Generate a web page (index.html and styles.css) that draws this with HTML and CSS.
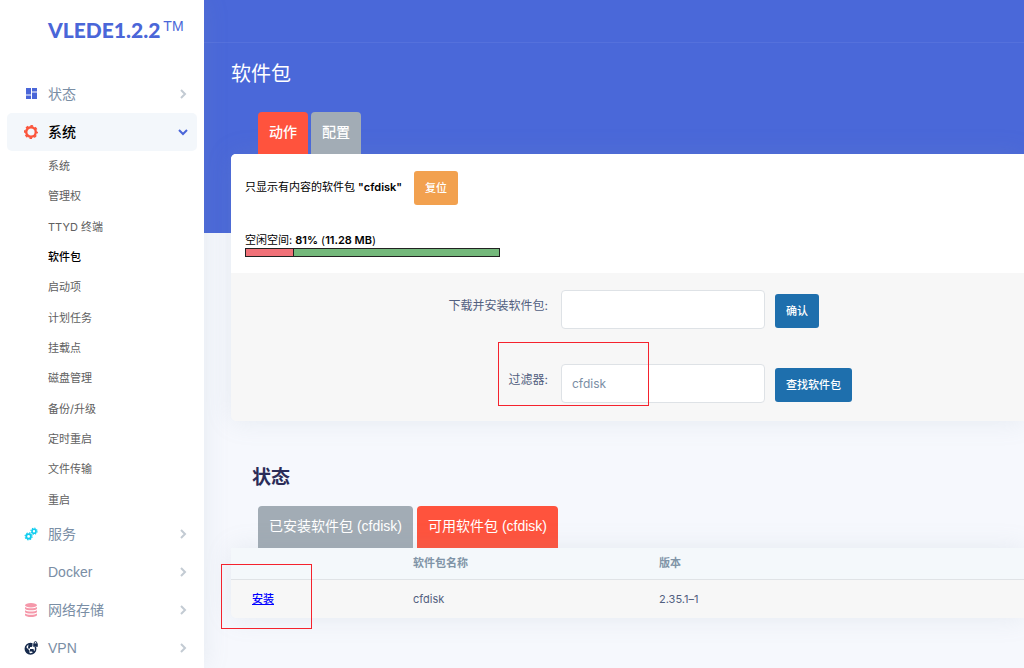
FILE: index.html
```html
<!DOCTYPE html>
<html lang="zh-CN">
<head>
  <meta charset="UTF-8">
  <meta name="viewport" content="width=device-width, initial-scale=1.0">
  <title>软件包</title>
  <link rel="stylesheet" href="styles.css">
</head>
<body>

  <!-- SIDEBAR -->
  <aside class="sidebar">
    <a class="brand" href="#">VLEDE1.2.2<span class="tm">TM</span></a>
    <nav class="menu">
      <a class="menu-item" href="#">
        <svg class="icon" viewBox="0 0 14 14" fill="#4a66d8"><path d="M2 1h5v6.500H2zM8 1h5v3.500H8zM8 5.500h5V12H8zM2 8.500h5V12H2z"/></svg>
        <span>状态</span>
        <svg class="arrow" viewBox="0 0 10 10"><path d="M3 1l4 4-4 4"/></svg>
      </a>
      <a class="menu-item open" href="#">
        <svg class="icon" viewBox="0 0 14 14" fill="none" stroke="#fb553c"><circle cx="7" cy="7" r="4.8" stroke-width="2.4"/><circle cx="7" cy="7" r="6.2" stroke-width="1.6" stroke-dasharray="2.6 2.27" stroke-dashoffset="1.3"/></svg>
        <span>系统</span>
        <svg class="arrow" viewBox="0 0 10 10"><path d="M1 3l4 4 4-4"/></svg>
      </a>
      <div class="submenu">
        <a href="#">系统</a>
        <a href="#">管理权</a>
        <a href="#">TTYD 终端</a>
        <a class="active" href="#">软件包</a>
        <a href="#">启动项</a>
        <a href="#">计划任务</a>
        <a href="#">挂载点</a>
        <a href="#">磁盘管理</a>
        <a href="#">备份/升级</a>
        <a href="#">定时重启</a>
        <a href="#">文件传输</a>
        <a href="#">重启</a>
      </div>
      <a class="menu-item" href="#">
        <svg class="icon" viewBox="0 0 14 14" fill="none" stroke="#11cdef"><circle cx="4.600" cy="9.400" r="2.300" stroke-width="1.800"/><circle cx="4.600" cy="9.400" r="3.500" stroke-width="1.200" stroke-dasharray="1.500 1.250"/><circle cx="10" cy="4.200" r="2" stroke-width="1.600"/><circle cx="10" cy="4.200" r="3.100" stroke-width="1.100" stroke-dasharray="1.300 1.130"/></svg>
        <span>服务</span>
        <svg class="arrow" viewBox="0 0 10 10"><path d="M3 1l4 4-4 4"/></svg>
      </a>
      <a class="menu-item" href="#">
        <span class="icon"></span>
        <span>Docker</span>
        <svg class="arrow" viewBox="0 0 10 10"><path d="M3 1l4 4-4 4"/></svg>
      </a>
      <a class="menu-item" href="#">
        <svg class="icon" viewBox="0 0 14 14" fill="#f598aa"><ellipse cx="7" cy="2.300" rx="6" ry="2.200"/><path d="M1 4c2 1.800 10 1.800 12 0v1.800c-1 2-11 2-12 0zM1 7.200c2 1.800 10 1.800 12 0V9c-1 2-11 2-12 0zM1 10.400c2 1.800 10 1.800 12 0v1.800c-1 2.400-11 2.400-12 0z"/></svg>
        <span>网络存储</span>
        <svg class="arrow" viewBox="0 0 10 10"><path d="M3 1l4 4-4 4"/></svg>
      </a>
      <a class="menu-item" href="#">
        <svg class="icon" viewBox="0 0 14 14"><circle cx="6.500" cy="7.700" r="5.200" fill="none" stroke="#172b4d" stroke-width="1.500"/><path d="M1.500 5.500l4 4V13C2.500 12.500 1 9 1.500 5.500zM4.500 3L9 2v3L7.500 6H6v1.500H4zM6 8h3.500l.5 2h1.500L9.500 12.500 8 10.500H6z" fill="#172b4d"/><path d="M8.500 0H14v6H8.500z" fill="#fff"/><path d="M9.200 2.400h4.600v3.400H9.200z" fill="#172b4d"/><path d="M10.300 2.600v-.8a1.200 1.200 0 0 1 2.400 0v.8" fill="none" stroke="#172b4d"/></svg>
        <span>VPN</span>
        <svg class="arrow" viewBox="0 0 10 10"><path d="M3 1l4 4-4 4"/></svg>
      </a>
    </nav>
  </aside>

  <!-- CONTENT -->
  <main class="main">
    <div class="topbar"></div>
    <h1 class="title">软件包</h1>

    <div class="tabs">
      <button class="tab on" type="button">动作</button>
      <button class="tab" type="button">配置</button>
    </div>
    <form class="card">
      <div class="card-head">
        <div class="only-row">
          <span>只显示有内容的软件包 <b>"cfdisk"</b></span>
          <button class="btn btn-reset" type="button">复位</button>
        </div>
        <div class="space-text">空闲空间: <b>81%</b> (<b>11.28 MB</b>)</div>
        <div class="space-bar"><div class="used" style="width: 19%"></div></div>
      </div>
      <div class="card-form">
        <div class="row">
          <label for="url">下载并安装软件包:</label>
          <input type="text" id="url">
          <button class="btn" type="button">确认</button>
        </div>
        <div class="row">
          <label for="query">过滤器:</label>
          <input type="text" id="query" value="cfdisk">
          <button class="btn" type="button">查找软件包</button>
          <i class="mark mark-filter"></i>
        </div>
      </div>
    </form>

    <h2 class="subtitle">状态</h2>
    <div class="tabs tabs-list">
      <button class="tab" type="button">已安装软件包 (cfdisk)</button>
      <button class="tab on" type="button">可用软件包 (cfdisk)</button>
    </div>
    <div class="list">
      <table>
        <thead>
          <tr><th class="col-act"></th><th class="col-name">软件包名称</th><th>版本</th></tr>
        </thead>
        <tbody>
          <tr><td><a href="#">安装</a></td><td>cfdisk</td><td>2.35.1–1</td></tr>
        </tbody>
      </table>
      <i class="mark mark-install"></i>
    </div>
  </main>

</body>
</html>
```
FILE: styles.css
```css
* { margin: 0; padding: 0; box-sizing: border-box; }

body {
  display: flex;
  min-height: 100vh;
  font-family: Inter, "Noto Sans CJK SC", sans-serif;
  font-size: 11px;
  line-height: 16px;
  color: #000;
  background: #f6f8fd;
  overflow: hidden;
}

button, input { font: inherit; }

/* sidebar */
.sidebar {
  position: relative;
  z-index: 1;
  flex: 0 0 204px;
  background: #fff;
  box-shadow: 0 0 24px rgba(136,152,170,0.15);
}

.brand {
  display: flex;
  height: 75px;
  padding: 14px 0 0 48px;
  font-family: Lato, sans-serif;
  font-size: 21px;
  font-weight: 900;
  line-height: 32px;
  color: #4a66d8;
  text-decoration: none;
}

.tm {
  margin-left: 3px;
  font-family: "Liberation Sans", sans-serif;
  font-size: 14px;
  font-weight: 400;
  line-height: 24px;
}

.menu-item {
  display: flex;
  align-items: center;
  height: 38px;
  margin: 0 7px;
  padding: 0 9px 0 17px;
  border-radius: 5px;
  font-family: "Liberation Sans", "Noto Sans CJK SC", sans-serif;
  font-size: 14px;
  color: #7a8ea5;
  text-decoration: none;
}

.menu-item.open { background: #f3f7fb; color: #000; font-weight: 500; }

.icon { width: 14px; height: 14px; margin-right: 10px; }

.arrow {
  width: 10px;
  height: 10px;
  margin-left: auto;
  fill: none;
  stroke: #c3cbd3;
  stroke-width: 2;
}

.open .arrow { stroke: #4a66d8; }

.submenu {
  display: grid;
  grid-auto-rows: 1fr;
  height: 364px;
}

.submenu a {
  display: flex;
  align-items: center;
  padding-left: 48px;
  color: #606060;
  text-decoration: none;
}

.submenu .active { color: #000; font-weight: 500; }

/* content */
.main {
  flex: 1;
  min-width: 0;
  padding-left: 27px;
  background: linear-gradient(#4a68d9, #4a68d9) 0 0 / 100% 233px no-repeat;
}

.topbar {
  height: 43px;
  margin-left: -27px;
  border-bottom: 1px solid #5571dc;
}

.title {
  padding: 16px 0 22px;
  font-size: 20px;
  font-weight: 400;
  line-height: 31px;
  color: #fff;
}

.tabs { display: flex; gap: 3px; padding-left: 27px; }

.tab {
  height: 42px;
  padding: 0 11px 2px;
  border: 0;
  border-radius: 4px 4px 0 0;
  background: #a2acb5;
  color: #fff;
  font-family: "Liberation Sans", "Noto Sans CJK SC", sans-serif;
  font-size: 14px;
}

.tab.on { background: #ff533d; }

.tabs:not(.tabs-list) .tab { font-weight: 500; }

.card, .list {
  border-radius: 5px 0 0 5px;
  background: #f7f7f7;
  box-shadow: 0 0 27px rgba(136,152,170,0.15);
}

.card-head {
  height: 119px;
  padding: 17px 14px;
  border-radius: 5px 0 0 0;
  background: #fff;
}

.card-head b { font-weight: 600; }

.only-row { display: flex; gap: 12px; margin-bottom: 28px; }
.only-row span { padding-top: 8px; }

.btn {
  height: 34px;
  padding: 0 11px;
  border: 0;
  border-radius: 3px;
  background: #1e6fad;
  color: #fff;
  font-weight: 500;
}

.btn-reset { background: #f2a14f; }

.space-text { line-height: 15px; }

.space-bar {
  width: 255px;
  height: 9px;
  border: 1px solid #222;
  background: #74b87b;
}

.used { height: 100%; border-right: 1px solid #222; background: #f07178; }

.card-form {
  display: grid;
  gap: 35px;
  padding: 17px 0 18px;
}

.row {
  position: relative;
  display: grid;
  grid-template-columns: 330px 204px auto;
  justify-content: start;
  align-items: start;
}

.row label {
  padding: 8px 13px 0 0;
  text-align: right;
  font-size: 12px;
  color: #525f7f;
}

.row input {
  height: 39px;
  padding: 0 10px;
  border: 1px solid #dee2e6;
  border-radius: 4px;
  background: #fff;
  font-size: 12px;
  color: #7a8ea5;
}

.row .btn { margin: 4px 0 0 10px; }

.subtitle {
  padding: 41px 0 13px 21px;
  font-size: 19px;
  line-height: 31px;
  color: #2b2c58;
}

.tabs-list { gap: 4px; }

.list { position: relative; }

table { width: 100%; border-collapse: collapse; text-align: left; }

th {
  height: 31px;
  padding-left: 21px;
  border-bottom: 1px solid #e0e3e6;
  background: #f4f8fb;
  font-weight: 600;
  color: #8094a7;
}

td { height: 39px; padding-left: 21px; color: #525f7f; }
td a { color: #00f; font-weight: 500; }

.col-act { width: 161px; }
.col-name { width: 246px; }

/* red frames over the filter field and the install link */
.mark { position: absolute; border: 1px solid #f5222d; }
.mark-filter { left: 267px; top: -22px; width: 151px; height: 64px; }
.mark-install { left: -10px; top: 16px; width: 91px; height: 65px; }
```
